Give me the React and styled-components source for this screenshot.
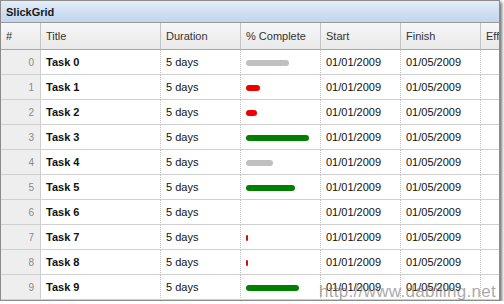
import React from "react";
import styled, { createGlobalStyle } from "styled-components";

const Global = createGlobalStyle`
  html, body { margin: 0; padding: 0; background: #fff; }
  body { font-family: "Liberation Sans", Arial, Helvetica, sans-serif; }
`;

const Frame = styled.div`
  position: relative;
  width: 498px;
  height: 299px;
  border: 1px solid #8c8c8c;
  box-shadow: 2px 2px 3px rgba(0, 0, 0, 0.55);
  overflow: hidden;
  background: #fff;
`;

const TitleBar = styled.div`
  height: 21px;
  display: flex;
  align-items: center;
  padding-left: 5px;
  font-size: 11px;
  font-weight: bold;
  color: #1a1a1a;
  background: linear-gradient(#e4edf9, #cfdff3 55%, #c2d6ee);
  border-bottom: 1px solid #9a9a9a;
`;

const Grid = styled.div`
  display: grid;
  grid-template-columns: 40px 120px 80px 80px 80px 80px 80px;
  width: max-content;
`;

const HeadCell = styled.div`
  height: 27px;
  display: flex;
  align-items: center;
  padding-left: 5px;
  box-sizing: border-box;
  font-size: 11px;
  color: #333;
  background: linear-gradient(#f7f7f7, #e9e9e9);
  border-right: 1px solid #c4c4c4;
  border-bottom: 1px solid #a8a8a8;
`;

const Cell = styled.div`
  height: 25px;
  box-sizing: border-box;
  display: flex;
  align-items: center;
  justify-content: ${(p) => (p.$num ? "flex-end" : "flex-start")};
  padding: ${(p) => (p.$num ? "0 6px 0 0" : "0 0 0 5px")};
  font-size: ${(p) => (p.$num ? "10px" : "11px")};
  font-weight: ${(p) => (p.$bold ? "bold" : "normal")};
  color: ${(p) => (p.$num ? "#8a8a8a" : "#111")};
  background: ${(p) => (p.$num ? "#eeeeee" : "#fff")};
  border-bottom: 1px solid #d0d0d0;
  border-right: ${(p) => (p.$num ? "1px solid #cfcfcf" : "1px dotted #c0c0c0")};
`;

const Bar = styled.span`
  display: block;
  height: 6px;
  border-radius: 3px;
  margin-top: 2px;
  background: ${(p) => p.$color};
`;

const Watermark = styled.div`
  position: absolute;
  left: 318px;
  top: 281px;
  font-size: 17px;
  color: rgba(110, 110, 110, 0.6);
  letter-spacing: 0.3px;
  pointer-events: none;
`;

const columns = ["#", "Title", "Duration", "% Complete", "Start", "Finish", "Effort"];

const bars = [
  [43, "#c0c0c0"],
  [14, "#ee0000"],
  [11, "#ee0000"],
  [63, "#008000"],
  [27, "#c0c0c0"],
  [49, "#008000"],
  [0, "transparent"],
  [2, "#d01010"],
  [2, "#d01010"],
  [53, "#008000"],
];

export default function App() {
  return (
    <>
      <Global />
      <Frame>
        <TitleBar>SlickGrid</TitleBar>
        <Grid>
          {columns.map((c) => (
            <HeadCell key={c}>{c}</HeadCell>
          ))}
          {bars.map(([w, color], i) => (
            <React.Fragment key={i}>
              <Cell $num>{i}</Cell>
              <Cell $bold>Task {i}</Cell>
              <Cell>5 days</Cell>
              <Cell>{w > 0 && <Bar $color={color} style={{ width: w }} />}</Cell>
              <Cell>01/01/2009</Cell>
              <Cell>01/05/2009</Cell>
              <Cell />
            </React.Fragment>
          ))}
        </Grid>
        <Watermark>http://www.dabiling.net</Watermark>
      </Frame>
    </>
  );
}
